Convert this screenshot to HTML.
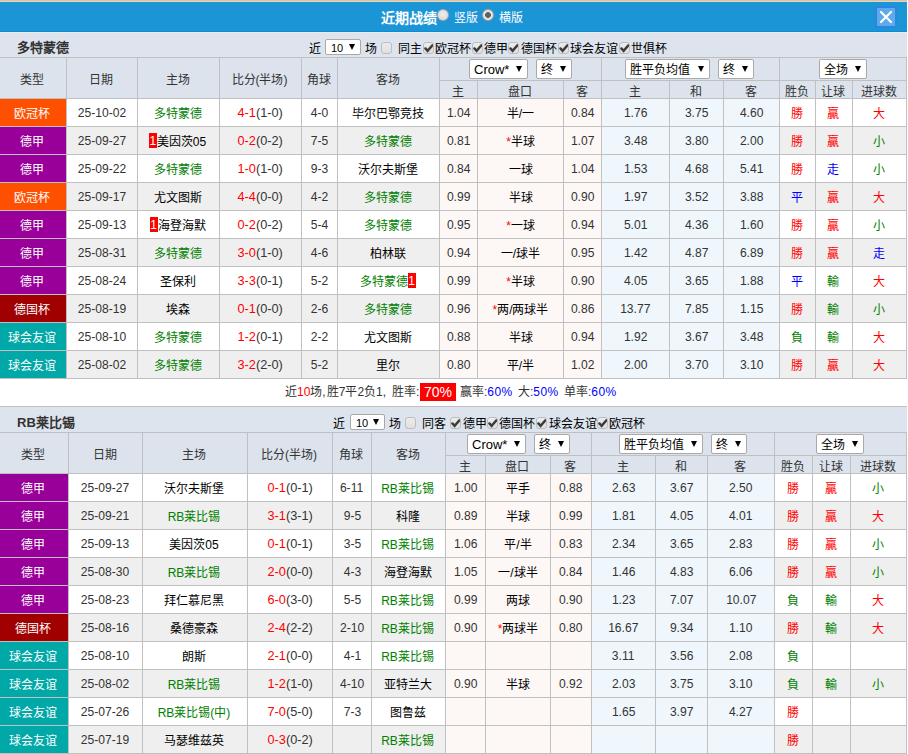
<!DOCTYPE html>
<html lang="zh-CN"><head><meta charset="utf-8"><title>近期战绩</title><style>
*{margin:0;padding:0;box-sizing:content-box}
html,body{width:908px;height:754px;overflow:hidden;background:#fff}
body{position:relative;font-family:"Liberation Sans",sans-serif;font-size:12px;color:#333}
body>div,body>svg{position:absolute;text-align:center;white-space:nowrap;overflow:hidden}
.sel{position:absolute;background:#fff;border:1px solid #a9a9a9;border-radius:2px;color:#000;text-align:left;padding-left:4px;box-sizing:border-box}
.tri{position:absolute;right:5px;top:50%;margin-top:-3px;width:0;height:0;border-left:3px solid transparent;border-right:3px solid transparent;border-top:6px solid #000}
.cb{position:absolute;width:9px;height:10px;border:1px solid #bdbdbd;border-radius:3px;background:linear-gradient(#ececec,#e0e0e0)}
.radio{position:absolute;width:10px;height:10px;border-radius:50%;border:1px solid #a8a8a8;background:radial-gradient(circle at 50% 40%,#ececec,#d6d6d6)}
.radio.on{background:radial-gradient(circle,#606060 0,#606060 2.6px,#f0f0f0 3.2px,#e0e0e0 4.5px,#c8c8c8 6px)}
.dg{display:inline-block;font-size:13px;transform:scaleX(0.93);line-height:normal;vertical-align:baseline;position:relative;top:-1px}
.bd{display:inline-block;position:relative;top:-2px;background:#f00;color:#fff;width:8px;height:15px;line-height:16px;font-size:12px;vertical-align:middle;text-align:center;overflow:hidden}
</style></head>
<body>
<div style="left:0px;top:0px;width:907px;height:1px;background:#c6c6c8"></div>
<div style="left:0px;top:1px;width:907px;height:1px;background:#f2d59c"></div>
<div style="left:0px;top:2px;width:907px;height:29px;background:#1b95d6"></div>
<div style="left:0px;top:31px;width:907px;height:1px;background:#0a8dd1"></div>
<div style="left:0px;top:32px;width:907px;height:1px;background:#e8ebef"></div>
<div style="left:875px;top:6px;width:18px;height:18px;border:2px solid #2a87df;background:#5eaaea"></div>
<svg style="position:absolute;left:875px;top:6px" width="22" height="22" viewBox="0 0 22 22"><path d="M6 6 L16 16 M16 6 L6 16" stroke="#fff" stroke-width="2.2" stroke-linecap="round"/></svg>
<div style="left:381px;top:9px;width:60px;height:18px;color:#fff;font-weight:bold;font-size:14px;line-height:18px;text-align:left">近期战绩</div>
<div class="radio" style="left:437px;top:9px"></div>
<div style="left:454px;top:10px;width:30px;height:16px;color:#fff;font-size:12px;line-height:16px;text-align:left">竖版</div>
<div class="radio on" style="left:482px;top:9px"></div>
<div style="left:499px;top:10px;width:30px;height:16px;color:#fff;font-size:12px;line-height:16px;text-align:left">横版</div>
<div style="left:0px;top:33px;width:907px;height:24px;background:#dde4ee"></div>
<div style="left:17px;top:39px;width:80px;height:17px;font-weight:bold;font-size:13px;line-height:17px;text-align:left;color:#333">多特蒙德</div>
<div style="left:309px;top:41px;width:60px;height:16px;font-size:12px;line-height:16px;text-align:left;color:#000;white-space:nowrap">近</div>
<div class="sel" style="left:325px;top:39px;width:36px;height:16px;line-height:17px;font-size:11px;padding-left:5px">10<i class="tri"></i></div>
<div style="left:365px;top:41px;width:60px;height:16px;font-size:12px;line-height:16px;text-align:left;color:#000;white-space:nowrap">场</div>
<div class="cb" style="left:381px;top:42px"></div>
<div style="left:398px;top:41px;width:60px;height:16px;font-size:12px;line-height:16px;text-align:left;color:#000;white-space:nowrap">同主</div>
<div class="cb" style="left:423px;top:42px"><svg width="11" height="12" viewBox="0 0 11 12" style="position:absolute;left:-1px;top:-1px"><path d="M2.4 6.4 L4.6 8.9 L9.4 3.3" stroke="#3c3c3c" stroke-width="2.4" fill="none" stroke-linecap="round" stroke-linejoin="miter"/></svg></div>
<div style="left:435px;top:41px;width:60px;height:16px;font-size:12px;line-height:16px;text-align:left;color:#000;white-space:nowrap">欧冠杯</div>
<div class="cb" style="left:472px;top:42px"><svg width="11" height="12" viewBox="0 0 11 12" style="position:absolute;left:-1px;top:-1px"><path d="M2.4 6.4 L4.6 8.9 L9.4 3.3" stroke="#3c3c3c" stroke-width="2.4" fill="none" stroke-linecap="round" stroke-linejoin="miter"/></svg></div>
<div style="left:484px;top:41px;width:60px;height:16px;font-size:12px;line-height:16px;text-align:left;color:#000;white-space:nowrap">德甲</div>
<div class="cb" style="left:508px;top:42px"><svg width="11" height="12" viewBox="0 0 11 12" style="position:absolute;left:-1px;top:-1px"><path d="M2.4 6.4 L4.6 8.9 L9.4 3.3" stroke="#3c3c3c" stroke-width="2.4" fill="none" stroke-linecap="round" stroke-linejoin="miter"/></svg></div>
<div style="left:521px;top:41px;width:60px;height:16px;font-size:12px;line-height:16px;text-align:left;color:#000;white-space:nowrap">德国杯</div>
<div class="cb" style="left:558px;top:42px"><svg width="11" height="12" viewBox="0 0 11 12" style="position:absolute;left:-1px;top:-1px"><path d="M2.4 6.4 L4.6 8.9 L9.4 3.3" stroke="#3c3c3c" stroke-width="2.4" fill="none" stroke-linecap="round" stroke-linejoin="miter"/></svg></div>
<div style="left:570px;top:41px;width:60px;height:16px;font-size:12px;line-height:16px;text-align:left;color:#000;white-space:nowrap">球会友谊</div>
<div class="cb" style="left:619px;top:42px"><svg width="11" height="12" viewBox="0 0 11 12" style="position:absolute;left:-1px;top:-1px"><path d="M2.4 6.4 L4.6 8.9 L9.4 3.3" stroke="#3c3c3c" stroke-width="2.4" fill="none" stroke-linecap="round" stroke-linejoin="miter"/></svg></div>
<div style="left:631px;top:41px;width:60px;height:16px;font-size:12px;line-height:16px;text-align:left;color:#000;white-space:nowrap">世俱杯</div>
<div style="left:0px;top:57px;width:907px;height:322px;background:#c0c0c0"></div>
<div style="left:0px;top:58px;width:66px;height:40px;background:#dce3ed;line-height:44px;padding-right:2px;box-sizing:border-box">类型</div>
<div style="left:67px;top:58px;width:70px;height:40px;background:#dce3ed;line-height:44px;padding-right:2px;box-sizing:border-box">日期</div>
<div style="left:138px;top:58px;width:81px;height:40px;background:#dce3ed;line-height:44px;padding-right:2px;box-sizing:border-box">主场</div>
<div style="left:220px;top:58px;width:81px;height:40px;background:#dce3ed;line-height:44px;padding-right:2px;box-sizing:border-box">比分(半场)</div>
<div style="left:302px;top:58px;width:35px;height:40px;background:#dce3ed;line-height:44px;padding-right:2px;box-sizing:border-box">角球</div>
<div style="left:338px;top:58px;width:101px;height:40px;background:#dce3ed;line-height:44px;padding-right:2px;box-sizing:border-box">客场</div>
<div style="left:440px;top:58px;width:161px;height:22px;background:#dce3ed"></div>
<div style="left:602px;top:58px;width:177px;height:22px;background:#dce3ed"></div>
<div style="left:780px;top:58px;width:126px;height:22px;background:#dce3ed"></div>
<div style="left:440px;top:81px;width:37px;height:17px;background:#dce3ed;line-height:22px;padding-right:2px;box-sizing:border-box">主</div>
<div style="left:478px;top:81px;width:85px;height:17px;background:#dce3ed;line-height:22px;padding-right:2px;box-sizing:border-box">盘口</div>
<div style="left:564px;top:81px;width:37px;height:17px;background:#dce3ed;line-height:22px;padding-right:2px;box-sizing:border-box">客</div>
<div style="left:602px;top:81px;width:67px;height:17px;background:#dce3ed;line-height:22px;padding-right:2px;box-sizing:border-box">主</div>
<div style="left:670px;top:81px;width:53px;height:17px;background:#dce3ed;line-height:22px;padding-right:2px;box-sizing:border-box">和</div>
<div style="left:724px;top:81px;width:55px;height:17px;background:#dce3ed;line-height:22px;padding-right:2px;box-sizing:border-box">客</div>
<div style="left:780px;top:81px;width:35px;height:17px;background:#dce3ed;line-height:22px;padding-right:2px;box-sizing:border-box">胜负</div>
<div style="left:816px;top:81px;width:36px;height:17px;background:#dce3ed;line-height:22px;padding-right:2px;box-sizing:border-box">让球</div>
<div style="left:853px;top:81px;width:53px;height:17px;background:#dce3ed;line-height:22px;padding-right:2px;box-sizing:border-box">进球数</div>
<div class="sel" style="left:469px;top:59px;width:59px;height:20px;line-height:20px;font-size:13px">Crow*<i class="tri"></i></div>
<div class="sel" style="left:536px;top:59px;width:36px;height:20px;line-height:20px;font-size:12px">终<i class="tri"></i></div>
<div class="sel" style="left:625px;top:59px;width:85px;height:20px;line-height:20px;font-size:12px">胜平负均值<i class="tri"></i></div>
<div class="sel" style="left:718px;top:59px;width:36px;height:20px;line-height:20px;font-size:12px">终<i class="tri"></i></div>
<div class="sel" style="left:819px;top:59px;width:48px;height:20px;line-height:20px;font-size:12px">全场<i class="tri"></i></div>
<div style="left:0px;top:99px;width:66px;height:27px;padding-right:2px;box-sizing:border-box;background:#ff5000;color:#fff;line-height:31px">欧冠杯</div>
<div style="left:67px;top:99px;width:70px;height:27px;background:#ffffff;color:#333;line-height:31px"><span class="dg">25-10-02</span></div>
<div style="left:138px;top:99px;width:81px;height:27px;padding-right:2px;box-sizing:border-box;background:#ffffff;color:#000;line-height:31px"><span style="color:#008000">多特蒙德</span></div>
<div style="left:220px;top:99px;width:81px;height:27px;background:#ffffff;color:#333;line-height:31px"><span class="dg" style="transform:scaleX(0.98)"><span style="color:#ff0000">4-1</span>(1-0)</span></div>
<div style="left:302px;top:99px;width:35px;height:27px;background:#ffffff;color:#333;line-height:31px"><span class="dg">4-0</span></div>
<div style="left:338px;top:99px;width:101px;height:27px;padding-right:2px;box-sizing:border-box;background:#ffffff;color:#000;line-height:31px"><span style="color:#000">毕尔巴鄂竞技</span></div>
<div style="left:440px;top:99px;width:37px;height:27px;background:#fdf8f6;color:#333;line-height:31px"><span class="dg">1.04</span></div>
<div style="left:478px;top:99px;width:85px;height:27px;background:#fdf8f6;color:#000;line-height:31px">半/一</div>
<div style="left:564px;top:99px;width:37px;height:27px;background:#fdf8f6;color:#333;line-height:31px"><span class="dg">0.84</span></div>
<div style="left:602px;top:99px;width:67px;height:27px;background:#f0f7fc;color:#333;line-height:31px"><span class="dg">1.76</span></div>
<div style="left:670px;top:99px;width:53px;height:27px;background:#f0f7fc;color:#333;line-height:31px"><span class="dg">3.75</span></div>
<div style="left:724px;top:99px;width:55px;height:27px;background:#f0f7fc;color:#333;line-height:31px"><span class="dg">4.60</span></div>
<div style="left:780px;top:99px;width:35px;height:27px;padding-right:2px;box-sizing:border-box;background:#ffffff;color:#ff0000;line-height:31px">勝</div>
<div style="left:816px;top:99px;width:36px;height:27px;padding-right:2px;box-sizing:border-box;background:#ffffff;color:#ff0000;line-height:31px">贏</div>
<div style="left:853px;top:99px;width:53px;height:27px;padding-right:2px;box-sizing:border-box;background:#ffffff;color:#ff0000;line-height:31px">大</div>
<div style="left:0px;top:127px;width:66px;height:27px;padding-right:2px;box-sizing:border-box;background:#990099;color:#fff;line-height:31px">德甲</div>
<div style="left:67px;top:127px;width:70px;height:27px;background:#efefef;color:#333;line-height:31px"><span class="dg">25-09-27</span></div>
<div style="left:138px;top:127px;width:81px;height:27px;padding-right:2px;box-sizing:border-box;background:#efefef;color:#000;line-height:31px"><span class="bd">1</span><span style="color:#000">美因茨05</span></div>
<div style="left:220px;top:127px;width:81px;height:27px;background:#efefef;color:#333;line-height:31px"><span class="dg" style="transform:scaleX(0.98)"><span style="color:#ff0000">0-2</span>(0-2)</span></div>
<div style="left:302px;top:127px;width:35px;height:27px;background:#efefef;color:#333;line-height:31px"><span class="dg">7-5</span></div>
<div style="left:338px;top:127px;width:101px;height:27px;padding-right:2px;box-sizing:border-box;background:#efefef;color:#000;line-height:31px"><span style="color:#008000">多特蒙德</span></div>
<div style="left:440px;top:127px;width:37px;height:27px;background:#fdf8f6;color:#333;line-height:31px"><span class="dg">0.81</span></div>
<div style="left:478px;top:127px;width:85px;height:27px;background:#fdf8f6;color:#000;line-height:31px"><span style="color:#ff0000">*</span>半球</div>
<div style="left:564px;top:127px;width:37px;height:27px;background:#fdf8f6;color:#333;line-height:31px"><span class="dg">1.07</span></div>
<div style="left:602px;top:127px;width:67px;height:27px;background:#f0f7fc;color:#333;line-height:31px"><span class="dg">3.48</span></div>
<div style="left:670px;top:127px;width:53px;height:27px;background:#f0f7fc;color:#333;line-height:31px"><span class="dg">3.80</span></div>
<div style="left:724px;top:127px;width:55px;height:27px;background:#f0f7fc;color:#333;line-height:31px"><span class="dg">2.00</span></div>
<div style="left:780px;top:127px;width:35px;height:27px;padding-right:2px;box-sizing:border-box;background:#efefef;color:#ff0000;line-height:31px">勝</div>
<div style="left:816px;top:127px;width:36px;height:27px;padding-right:2px;box-sizing:border-box;background:#efefef;color:#ff0000;line-height:31px">贏</div>
<div style="left:853px;top:127px;width:53px;height:27px;padding-right:2px;box-sizing:border-box;background:#efefef;color:#008000;line-height:31px">小</div>
<div style="left:0px;top:155px;width:66px;height:27px;padding-right:2px;box-sizing:border-box;background:#990099;color:#fff;line-height:31px">德甲</div>
<div style="left:67px;top:155px;width:70px;height:27px;background:#ffffff;color:#333;line-height:31px"><span class="dg">25-09-22</span></div>
<div style="left:138px;top:155px;width:81px;height:27px;padding-right:2px;box-sizing:border-box;background:#ffffff;color:#000;line-height:31px"><span style="color:#008000">多特蒙德</span></div>
<div style="left:220px;top:155px;width:81px;height:27px;background:#ffffff;color:#333;line-height:31px"><span class="dg" style="transform:scaleX(0.98)"><span style="color:#ff0000">1-0</span>(1-0)</span></div>
<div style="left:302px;top:155px;width:35px;height:27px;background:#ffffff;color:#333;line-height:31px"><span class="dg">9-3</span></div>
<div style="left:338px;top:155px;width:101px;height:27px;padding-right:2px;box-sizing:border-box;background:#ffffff;color:#000;line-height:31px"><span style="color:#000">沃尔夫斯堡</span></div>
<div style="left:440px;top:155px;width:37px;height:27px;background:#fdf8f6;color:#333;line-height:31px"><span class="dg">0.84</span></div>
<div style="left:478px;top:155px;width:85px;height:27px;background:#fdf8f6;color:#000;line-height:31px">一球</div>
<div style="left:564px;top:155px;width:37px;height:27px;background:#fdf8f6;color:#333;line-height:31px"><span class="dg">1.04</span></div>
<div style="left:602px;top:155px;width:67px;height:27px;background:#f0f7fc;color:#333;line-height:31px"><span class="dg">1.53</span></div>
<div style="left:670px;top:155px;width:53px;height:27px;background:#f0f7fc;color:#333;line-height:31px"><span class="dg">4.68</span></div>
<div style="left:724px;top:155px;width:55px;height:27px;background:#f0f7fc;color:#333;line-height:31px"><span class="dg">5.41</span></div>
<div style="left:780px;top:155px;width:35px;height:27px;padding-right:2px;box-sizing:border-box;background:#ffffff;color:#ff0000;line-height:31px">勝</div>
<div style="left:816px;top:155px;width:36px;height:27px;padding-right:2px;box-sizing:border-box;background:#ffffff;color:#0000ff;line-height:31px">走</div>
<div style="left:853px;top:155px;width:53px;height:27px;padding-right:2px;box-sizing:border-box;background:#ffffff;color:#008000;line-height:31px">小</div>
<div style="left:0px;top:183px;width:66px;height:27px;padding-right:2px;box-sizing:border-box;background:#ff5000;color:#fff;line-height:31px">欧冠杯</div>
<div style="left:67px;top:183px;width:70px;height:27px;background:#efefef;color:#333;line-height:31px"><span class="dg">25-09-17</span></div>
<div style="left:138px;top:183px;width:81px;height:27px;padding-right:2px;box-sizing:border-box;background:#efefef;color:#000;line-height:31px"><span style="color:#000">尤文图斯</span></div>
<div style="left:220px;top:183px;width:81px;height:27px;background:#efefef;color:#333;line-height:31px"><span class="dg" style="transform:scaleX(0.98)"><span style="color:#ff0000">4-4</span>(0-0)</span></div>
<div style="left:302px;top:183px;width:35px;height:27px;background:#efefef;color:#333;line-height:31px"><span class="dg">4-2</span></div>
<div style="left:338px;top:183px;width:101px;height:27px;padding-right:2px;box-sizing:border-box;background:#efefef;color:#000;line-height:31px"><span style="color:#008000">多特蒙德</span></div>
<div style="left:440px;top:183px;width:37px;height:27px;background:#fdf8f6;color:#333;line-height:31px"><span class="dg">0.99</span></div>
<div style="left:478px;top:183px;width:85px;height:27px;background:#fdf8f6;color:#000;line-height:31px">半球</div>
<div style="left:564px;top:183px;width:37px;height:27px;background:#fdf8f6;color:#333;line-height:31px"><span class="dg">0.90</span></div>
<div style="left:602px;top:183px;width:67px;height:27px;background:#f0f7fc;color:#333;line-height:31px"><span class="dg">1.97</span></div>
<div style="left:670px;top:183px;width:53px;height:27px;background:#f0f7fc;color:#333;line-height:31px"><span class="dg">3.52</span></div>
<div style="left:724px;top:183px;width:55px;height:27px;background:#f0f7fc;color:#333;line-height:31px"><span class="dg">3.88</span></div>
<div style="left:780px;top:183px;width:35px;height:27px;padding-right:2px;box-sizing:border-box;background:#efefef;color:#0000ff;line-height:31px">平</div>
<div style="left:816px;top:183px;width:36px;height:27px;padding-right:2px;box-sizing:border-box;background:#efefef;color:#ff0000;line-height:31px">贏</div>
<div style="left:853px;top:183px;width:53px;height:27px;padding-right:2px;box-sizing:border-box;background:#efefef;color:#ff0000;line-height:31px">大</div>
<div style="left:0px;top:211px;width:66px;height:27px;padding-right:2px;box-sizing:border-box;background:#990099;color:#fff;line-height:31px">德甲</div>
<div style="left:67px;top:211px;width:70px;height:27px;background:#ffffff;color:#333;line-height:31px"><span class="dg">25-09-13</span></div>
<div style="left:138px;top:211px;width:81px;height:27px;padding-right:2px;box-sizing:border-box;background:#ffffff;color:#000;line-height:31px"><span class="bd">1</span><span style="color:#000">海登海默</span></div>
<div style="left:220px;top:211px;width:81px;height:27px;background:#ffffff;color:#333;line-height:31px"><span class="dg" style="transform:scaleX(0.98)"><span style="color:#ff0000">0-2</span>(0-2)</span></div>
<div style="left:302px;top:211px;width:35px;height:27px;background:#ffffff;color:#333;line-height:31px"><span class="dg">5-4</span></div>
<div style="left:338px;top:211px;width:101px;height:27px;padding-right:2px;box-sizing:border-box;background:#ffffff;color:#000;line-height:31px"><span style="color:#008000">多特蒙德</span></div>
<div style="left:440px;top:211px;width:37px;height:27px;background:#fdf8f6;color:#333;line-height:31px"><span class="dg">0.95</span></div>
<div style="left:478px;top:211px;width:85px;height:27px;background:#fdf8f6;color:#000;line-height:31px"><span style="color:#ff0000">*</span>一球</div>
<div style="left:564px;top:211px;width:37px;height:27px;background:#fdf8f6;color:#333;line-height:31px"><span class="dg">0.94</span></div>
<div style="left:602px;top:211px;width:67px;height:27px;background:#f0f7fc;color:#333;line-height:31px"><span class="dg">5.01</span></div>
<div style="left:670px;top:211px;width:53px;height:27px;background:#f0f7fc;color:#333;line-height:31px"><span class="dg">4.36</span></div>
<div style="left:724px;top:211px;width:55px;height:27px;background:#f0f7fc;color:#333;line-height:31px"><span class="dg">1.60</span></div>
<div style="left:780px;top:211px;width:35px;height:27px;padding-right:2px;box-sizing:border-box;background:#ffffff;color:#ff0000;line-height:31px">勝</div>
<div style="left:816px;top:211px;width:36px;height:27px;padding-right:2px;box-sizing:border-box;background:#ffffff;color:#ff0000;line-height:31px">贏</div>
<div style="left:853px;top:211px;width:53px;height:27px;padding-right:2px;box-sizing:border-box;background:#ffffff;color:#008000;line-height:31px">小</div>
<div style="left:0px;top:239px;width:66px;height:27px;padding-right:2px;box-sizing:border-box;background:#990099;color:#fff;line-height:31px">德甲</div>
<div style="left:67px;top:239px;width:70px;height:27px;background:#efefef;color:#333;line-height:31px"><span class="dg">25-08-31</span></div>
<div style="left:138px;top:239px;width:81px;height:27px;padding-right:2px;box-sizing:border-box;background:#efefef;color:#000;line-height:31px"><span style="color:#008000">多特蒙德</span></div>
<div style="left:220px;top:239px;width:81px;height:27px;background:#efefef;color:#333;line-height:31px"><span class="dg" style="transform:scaleX(0.98)"><span style="color:#ff0000">3-0</span>(1-0)</span></div>
<div style="left:302px;top:239px;width:35px;height:27px;background:#efefef;color:#333;line-height:31px"><span class="dg">4-6</span></div>
<div style="left:338px;top:239px;width:101px;height:27px;padding-right:2px;box-sizing:border-box;background:#efefef;color:#000;line-height:31px"><span style="color:#000">柏林联</span></div>
<div style="left:440px;top:239px;width:37px;height:27px;background:#fdf8f6;color:#333;line-height:31px"><span class="dg">0.94</span></div>
<div style="left:478px;top:239px;width:85px;height:27px;background:#fdf8f6;color:#000;line-height:31px">一/球半</div>
<div style="left:564px;top:239px;width:37px;height:27px;background:#fdf8f6;color:#333;line-height:31px"><span class="dg">0.95</span></div>
<div style="left:602px;top:239px;width:67px;height:27px;background:#f0f7fc;color:#333;line-height:31px"><span class="dg">1.42</span></div>
<div style="left:670px;top:239px;width:53px;height:27px;background:#f0f7fc;color:#333;line-height:31px"><span class="dg">4.87</span></div>
<div style="left:724px;top:239px;width:55px;height:27px;background:#f0f7fc;color:#333;line-height:31px"><span class="dg">6.89</span></div>
<div style="left:780px;top:239px;width:35px;height:27px;padding-right:2px;box-sizing:border-box;background:#efefef;color:#ff0000;line-height:31px">勝</div>
<div style="left:816px;top:239px;width:36px;height:27px;padding-right:2px;box-sizing:border-box;background:#efefef;color:#ff0000;line-height:31px">贏</div>
<div style="left:853px;top:239px;width:53px;height:27px;padding-right:2px;box-sizing:border-box;background:#efefef;color:#0000ff;line-height:31px">走</div>
<div style="left:0px;top:267px;width:66px;height:27px;padding-right:2px;box-sizing:border-box;background:#990099;color:#fff;line-height:31px">德甲</div>
<div style="left:67px;top:267px;width:70px;height:27px;background:#ffffff;color:#333;line-height:31px"><span class="dg">25-08-24</span></div>
<div style="left:138px;top:267px;width:81px;height:27px;padding-right:2px;box-sizing:border-box;background:#ffffff;color:#000;line-height:31px"><span style="color:#000">圣保利</span></div>
<div style="left:220px;top:267px;width:81px;height:27px;background:#ffffff;color:#333;line-height:31px"><span class="dg" style="transform:scaleX(0.98)"><span style="color:#ff0000">3-3</span>(0-1)</span></div>
<div style="left:302px;top:267px;width:35px;height:27px;background:#ffffff;color:#333;line-height:31px"><span class="dg">5-2</span></div>
<div style="left:338px;top:267px;width:101px;height:27px;padding-right:2px;box-sizing:border-box;background:#ffffff;color:#000;line-height:31px"><span style="color:#008000">多特蒙德</span><span class="bd">1</span></div>
<div style="left:440px;top:267px;width:37px;height:27px;background:#fdf8f6;color:#333;line-height:31px"><span class="dg">0.99</span></div>
<div style="left:478px;top:267px;width:85px;height:27px;background:#fdf8f6;color:#000;line-height:31px"><span style="color:#ff0000">*</span>半球</div>
<div style="left:564px;top:267px;width:37px;height:27px;background:#fdf8f6;color:#333;line-height:31px"><span class="dg">0.90</span></div>
<div style="left:602px;top:267px;width:67px;height:27px;background:#f0f7fc;color:#333;line-height:31px"><span class="dg">4.05</span></div>
<div style="left:670px;top:267px;width:53px;height:27px;background:#f0f7fc;color:#333;line-height:31px"><span class="dg">3.65</span></div>
<div style="left:724px;top:267px;width:55px;height:27px;background:#f0f7fc;color:#333;line-height:31px"><span class="dg">1.88</span></div>
<div style="left:780px;top:267px;width:35px;height:27px;padding-right:2px;box-sizing:border-box;background:#ffffff;color:#0000ff;line-height:31px">平</div>
<div style="left:816px;top:267px;width:36px;height:27px;padding-right:2px;box-sizing:border-box;background:#ffffff;color:#008000;line-height:31px">輸</div>
<div style="left:853px;top:267px;width:53px;height:27px;padding-right:2px;box-sizing:border-box;background:#ffffff;color:#ff0000;line-height:31px">大</div>
<div style="left:0px;top:295px;width:66px;height:27px;padding-right:2px;box-sizing:border-box;background:#a00000;color:#fff;line-height:31px">德国杯</div>
<div style="left:67px;top:295px;width:70px;height:27px;background:#efefef;color:#333;line-height:31px"><span class="dg">25-08-19</span></div>
<div style="left:138px;top:295px;width:81px;height:27px;padding-right:2px;box-sizing:border-box;background:#efefef;color:#000;line-height:31px"><span style="color:#000">埃森</span></div>
<div style="left:220px;top:295px;width:81px;height:27px;background:#efefef;color:#333;line-height:31px"><span class="dg" style="transform:scaleX(0.98)"><span style="color:#ff0000">0-1</span>(0-0)</span></div>
<div style="left:302px;top:295px;width:35px;height:27px;background:#efefef;color:#333;line-height:31px"><span class="dg">2-6</span></div>
<div style="left:338px;top:295px;width:101px;height:27px;padding-right:2px;box-sizing:border-box;background:#efefef;color:#000;line-height:31px"><span style="color:#008000">多特蒙德</span></div>
<div style="left:440px;top:295px;width:37px;height:27px;background:#fdf8f6;color:#333;line-height:31px"><span class="dg">0.96</span></div>
<div style="left:478px;top:295px;width:85px;height:27px;background:#fdf8f6;color:#000;line-height:31px"><span style="color:#ff0000">*</span>两/两球半</div>
<div style="left:564px;top:295px;width:37px;height:27px;background:#fdf8f6;color:#333;line-height:31px"><span class="dg">0.86</span></div>
<div style="left:602px;top:295px;width:67px;height:27px;background:#f0f7fc;color:#333;line-height:31px"><span class="dg">13.77</span></div>
<div style="left:670px;top:295px;width:53px;height:27px;background:#f0f7fc;color:#333;line-height:31px"><span class="dg">7.85</span></div>
<div style="left:724px;top:295px;width:55px;height:27px;background:#f0f7fc;color:#333;line-height:31px"><span class="dg">1.15</span></div>
<div style="left:780px;top:295px;width:35px;height:27px;padding-right:2px;box-sizing:border-box;background:#efefef;color:#ff0000;line-height:31px">勝</div>
<div style="left:816px;top:295px;width:36px;height:27px;padding-right:2px;box-sizing:border-box;background:#efefef;color:#008000;line-height:31px">輸</div>
<div style="left:853px;top:295px;width:53px;height:27px;padding-right:2px;box-sizing:border-box;background:#efefef;color:#008000;line-height:31px">小</div>
<div style="left:0px;top:323px;width:66px;height:27px;padding-right:2px;box-sizing:border-box;background:#00a8a8;color:#fff;line-height:31px">球会友谊</div>
<div style="left:67px;top:323px;width:70px;height:27px;background:#ffffff;color:#333;line-height:31px"><span class="dg">25-08-10</span></div>
<div style="left:138px;top:323px;width:81px;height:27px;padding-right:2px;box-sizing:border-box;background:#ffffff;color:#000;line-height:31px"><span style="color:#008000">多特蒙德</span></div>
<div style="left:220px;top:323px;width:81px;height:27px;background:#ffffff;color:#333;line-height:31px"><span class="dg" style="transform:scaleX(0.98)"><span style="color:#ff0000">1-2</span>(0-1)</span></div>
<div style="left:302px;top:323px;width:35px;height:27px;background:#ffffff;color:#333;line-height:31px"><span class="dg">2-2</span></div>
<div style="left:338px;top:323px;width:101px;height:27px;padding-right:2px;box-sizing:border-box;background:#ffffff;color:#000;line-height:31px"><span style="color:#000">尤文图斯</span></div>
<div style="left:440px;top:323px;width:37px;height:27px;background:#fdf8f6;color:#333;line-height:31px"><span class="dg">0.88</span></div>
<div style="left:478px;top:323px;width:85px;height:27px;background:#fdf8f6;color:#000;line-height:31px">半球</div>
<div style="left:564px;top:323px;width:37px;height:27px;background:#fdf8f6;color:#333;line-height:31px"><span class="dg">0.94</span></div>
<div style="left:602px;top:323px;width:67px;height:27px;background:#f0f7fc;color:#333;line-height:31px"><span class="dg">1.92</span></div>
<div style="left:670px;top:323px;width:53px;height:27px;background:#f0f7fc;color:#333;line-height:31px"><span class="dg">3.67</span></div>
<div style="left:724px;top:323px;width:55px;height:27px;background:#f0f7fc;color:#333;line-height:31px"><span class="dg">3.48</span></div>
<div style="left:780px;top:323px;width:35px;height:27px;padding-right:2px;box-sizing:border-box;background:#ffffff;color:#008000;line-height:31px">負</div>
<div style="left:816px;top:323px;width:36px;height:27px;padding-right:2px;box-sizing:border-box;background:#ffffff;color:#008000;line-height:31px">輸</div>
<div style="left:853px;top:323px;width:53px;height:27px;padding-right:2px;box-sizing:border-box;background:#ffffff;color:#ff0000;line-height:31px">大</div>
<div style="left:0px;top:351px;width:66px;height:27px;padding-right:2px;box-sizing:border-box;background:#00a8a8;color:#fff;line-height:31px">球会友谊</div>
<div style="left:67px;top:351px;width:70px;height:27px;background:#efefef;color:#333;line-height:31px"><span class="dg">25-08-02</span></div>
<div style="left:138px;top:351px;width:81px;height:27px;padding-right:2px;box-sizing:border-box;background:#efefef;color:#000;line-height:31px"><span style="color:#008000">多特蒙德</span></div>
<div style="left:220px;top:351px;width:81px;height:27px;background:#efefef;color:#333;line-height:31px"><span class="dg" style="transform:scaleX(0.98)"><span style="color:#ff0000">3-2</span>(2-0)</span></div>
<div style="left:302px;top:351px;width:35px;height:27px;background:#efefef;color:#333;line-height:31px"><span class="dg">5-2</span></div>
<div style="left:338px;top:351px;width:101px;height:27px;padding-right:2px;box-sizing:border-box;background:#efefef;color:#000;line-height:31px"><span style="color:#000">里尔</span></div>
<div style="left:440px;top:351px;width:37px;height:27px;background:#fdf8f6;color:#333;line-height:31px"><span class="dg">0.80</span></div>
<div style="left:478px;top:351px;width:85px;height:27px;background:#fdf8f6;color:#000;line-height:31px">平/半</div>
<div style="left:564px;top:351px;width:37px;height:27px;background:#fdf8f6;color:#333;line-height:31px"><span class="dg">1.02</span></div>
<div style="left:602px;top:351px;width:67px;height:27px;background:#f0f7fc;color:#333;line-height:31px"><span class="dg">2.00</span></div>
<div style="left:670px;top:351px;width:53px;height:27px;background:#f0f7fc;color:#333;line-height:31px"><span class="dg">3.70</span></div>
<div style="left:724px;top:351px;width:55px;height:27px;background:#f0f7fc;color:#333;line-height:31px"><span class="dg">3.10</span></div>
<div style="left:780px;top:351px;width:35px;height:27px;padding-right:2px;box-sizing:border-box;background:#efefef;color:#ff0000;line-height:31px">勝</div>
<div style="left:816px;top:351px;width:36px;height:27px;padding-right:2px;box-sizing:border-box;background:#efefef;color:#ff0000;line-height:31px">贏</div>
<div style="left:853px;top:351px;width:53px;height:27px;padding-right:2px;box-sizing:border-box;background:#efefef;color:#ff0000;line-height:31px">大</div>
<div style="left:0px;top:379px;width:906px;height:27px;background:#fff"></div>
<div style="left:285px;top:382px;height:20px;line-height:20px;font-size:12px;color:#333;text-align:left;width:auto">近<span style="color:#f00">10</span>场,<span style="margin-left:1px">胜</span>7平2负1,</div>
<div style="left:392px;top:382px;height:20px;line-height:20px;font-size:12px;color:#333;text-align:left;width:auto">胜率:</div>
<div style="left:420px;top:383px;width:36px;height:18px;line-height:19px;background:#f00;color:#fff;font-size:14px">70%</div>
<div style="left:460px;top:382px;height:20px;line-height:20px;font-size:12px;color:#333;text-align:left;width:auto">赢率:<span style="color:#00f;letter-spacing:0.4px">60%</span></div>
<div style="left:518px;top:382px;height:20px;line-height:20px;font-size:12px;color:#333;text-align:left;width:auto">大:<span style="color:#00f;letter-spacing:0.4px">50%</span></div>
<div style="left:564px;top:382px;height:20px;line-height:20px;font-size:12px;color:#333;text-align:left;width:auto">单率:<span style="color:#00f;letter-spacing:0.4px">60%</span></div>
<div style="left:0px;top:406px;width:907px;height:1px;background:#c0c0c0"></div>
<div style="left:0px;top:407px;width:907px;height:25px;background:#dde4ee"></div>
<div style="left:17px;top:414px;width:80px;height:17px;font-weight:bold;font-size:13px;line-height:17px;text-align:left;color:#333">RB莱比锡</div>
<div style="left:333px;top:416px;width:60px;height:16px;font-size:12px;line-height:16px;text-align:left;color:#000;white-space:nowrap">近</div>
<div class="sel" style="left:350px;top:414px;width:35px;height:16px;line-height:17px;font-size:11px;padding-left:5px">10<i class="tri"></i></div>
<div style="left:389px;top:416px;width:60px;height:16px;font-size:12px;line-height:16px;text-align:left;color:#000;white-space:nowrap">场</div>
<div class="cb" style="left:405px;top:417px"></div>
<div style="left:422px;top:416px;width:60px;height:16px;font-size:12px;line-height:16px;text-align:left;color:#000;white-space:nowrap">同客</div>
<div class="cb" style="left:450px;top:417px"><svg width="11" height="12" viewBox="0 0 11 12" style="position:absolute;left:-1px;top:-1px"><path d="M2.4 6.4 L4.6 8.9 L9.4 3.3" stroke="#3c3c3c" stroke-width="2.4" fill="none" stroke-linecap="round" stroke-linejoin="miter"/></svg></div>
<div style="left:463px;top:416px;width:60px;height:16px;font-size:12px;line-height:16px;text-align:left;color:#000;white-space:nowrap">德甲</div>
<div class="cb" style="left:487px;top:417px"><svg width="11" height="12" viewBox="0 0 11 12" style="position:absolute;left:-1px;top:-1px"><path d="M2.4 6.4 L4.6 8.9 L9.4 3.3" stroke="#3c3c3c" stroke-width="2.4" fill="none" stroke-linecap="round" stroke-linejoin="miter"/></svg></div>
<div style="left:499px;top:416px;width:60px;height:16px;font-size:12px;line-height:16px;text-align:left;color:#000;white-space:nowrap">德国杯</div>
<div class="cb" style="left:536px;top:417px"><svg width="11" height="12" viewBox="0 0 11 12" style="position:absolute;left:-1px;top:-1px"><path d="M2.4 6.4 L4.6 8.9 L9.4 3.3" stroke="#3c3c3c" stroke-width="2.4" fill="none" stroke-linecap="round" stroke-linejoin="miter"/></svg></div>
<div style="left:549px;top:416px;width:60px;height:16px;font-size:12px;line-height:16px;text-align:left;color:#000;white-space:nowrap">球会友谊</div>
<div class="cb" style="left:597px;top:417px"><svg width="11" height="12" viewBox="0 0 11 12" style="position:absolute;left:-1px;top:-1px"><path d="M2.4 6.4 L4.6 8.9 L9.4 3.3" stroke="#3c3c3c" stroke-width="2.4" fill="none" stroke-linecap="round" stroke-linejoin="miter"/></svg></div>
<div style="left:609px;top:416px;width:60px;height:16px;font-size:12px;line-height:16px;text-align:left;color:#000;white-space:nowrap">欧冠杯</div>
<div style="left:0px;top:432px;width:907px;height:322px;background:#c0c0c0"></div>
<div style="left:0px;top:433px;width:68px;height:40px;background:#dce3ed;line-height:44px;padding-right:2px;box-sizing:border-box">类型</div>
<div style="left:69px;top:433px;width:73px;height:40px;background:#dce3ed;line-height:44px;padding-right:2px;box-sizing:border-box">日期</div>
<div style="left:143px;top:433px;width:104px;height:40px;background:#dce3ed;line-height:44px;padding-right:2px;box-sizing:border-box">主场</div>
<div style="left:248px;top:433px;width:84px;height:40px;background:#dce3ed;line-height:44px;padding-right:2px;box-sizing:border-box">比分(半场)</div>
<div style="left:333px;top:433px;width:38px;height:40px;background:#dce3ed;line-height:44px;padding-right:2px;box-sizing:border-box">角球</div>
<div style="left:372px;top:433px;width:73px;height:40px;background:#dce3ed;line-height:44px;padding-right:2px;box-sizing:border-box">客场</div>
<div style="left:446px;top:433px;width:145px;height:22px;background:#dce3ed"></div>
<div style="left:592px;top:433px;width:182px;height:22px;background:#dce3ed"></div>
<div style="left:775px;top:433px;width:131px;height:22px;background:#dce3ed"></div>
<div style="left:446px;top:456px;width:39px;height:17px;background:#dce3ed;line-height:22px;padding-right:2px;box-sizing:border-box">主</div>
<div style="left:486px;top:456px;width:64px;height:17px;background:#dce3ed;line-height:22px;padding-right:2px;box-sizing:border-box">盘口</div>
<div style="left:551px;top:456px;width:40px;height:17px;background:#dce3ed;line-height:22px;padding-right:2px;box-sizing:border-box">客</div>
<div style="left:592px;top:456px;width:63px;height:17px;background:#dce3ed;line-height:22px;padding-right:2px;box-sizing:border-box">主</div>
<div style="left:656px;top:456px;width:51px;height:17px;background:#dce3ed;line-height:22px;padding-right:2px;box-sizing:border-box">和</div>
<div style="left:708px;top:456px;width:66px;height:17px;background:#dce3ed;line-height:22px;padding-right:2px;box-sizing:border-box">客</div>
<div style="left:775px;top:456px;width:37px;height:17px;background:#dce3ed;line-height:22px;padding-right:2px;box-sizing:border-box">胜负</div>
<div style="left:813px;top:456px;width:37px;height:17px;background:#dce3ed;line-height:22px;padding-right:2px;box-sizing:border-box">让球</div>
<div style="left:851px;top:456px;width:55px;height:17px;background:#dce3ed;line-height:22px;padding-right:2px;box-sizing:border-box">进球数</div>
<div class="sel" style="left:467px;top:434px;width:59px;height:20px;line-height:20px;font-size:13px">Crow*<i class="tri"></i></div>
<div class="sel" style="left:534px;top:434px;width:36px;height:20px;line-height:20px;font-size:12px">终<i class="tri"></i></div>
<div class="sel" style="left:619px;top:434px;width:84px;height:20px;line-height:20px;font-size:12px">胜平负均值<i class="tri"></i></div>
<div class="sel" style="left:711px;top:434px;width:36px;height:20px;line-height:20px;font-size:12px">终<i class="tri"></i></div>
<div class="sel" style="left:816px;top:434px;width:48px;height:20px;line-height:20px;font-size:12px">全场<i class="tri"></i></div>
<div style="left:0px;top:474px;width:68px;height:27px;padding-right:2px;box-sizing:border-box;background:#990099;color:#fff;line-height:31px">德甲</div>
<div style="left:69px;top:474px;width:73px;height:27px;background:#ffffff;color:#333;line-height:31px"><span class="dg">25-09-27</span></div>
<div style="left:143px;top:474px;width:104px;height:27px;padding-right:2px;box-sizing:border-box;background:#ffffff;color:#000;line-height:31px"><span style="color:#000">沃尔夫斯堡</span></div>
<div style="left:248px;top:474px;width:84px;height:27px;background:#ffffff;color:#333;line-height:31px"><span class="dg" style="transform:scaleX(0.98)"><span style="color:#ff0000">0-1</span>(0-1)</span></div>
<div style="left:333px;top:474px;width:38px;height:27px;background:#ffffff;color:#333;line-height:31px"><span class="dg">6-11</span></div>
<div style="left:372px;top:474px;width:73px;height:27px;padding-right:2px;box-sizing:border-box;background:#ffffff;color:#000;line-height:31px"><span style="color:#008000">RB莱比锡</span></div>
<div style="left:446px;top:474px;width:39px;height:27px;background:#fdf8f6;color:#333;line-height:31px"><span class="dg">1.00</span></div>
<div style="left:486px;top:474px;width:64px;height:27px;background:#fdf8f6;color:#000;line-height:31px">平手</div>
<div style="left:551px;top:474px;width:40px;height:27px;background:#fdf8f6;color:#333;line-height:31px"><span class="dg">0.88</span></div>
<div style="left:592px;top:474px;width:63px;height:27px;background:#f0f7fc;color:#333;line-height:31px"><span class="dg">2.63</span></div>
<div style="left:656px;top:474px;width:51px;height:27px;background:#f0f7fc;color:#333;line-height:31px"><span class="dg">3.67</span></div>
<div style="left:708px;top:474px;width:66px;height:27px;background:#f0f7fc;color:#333;line-height:31px"><span class="dg">2.50</span></div>
<div style="left:775px;top:474px;width:37px;height:27px;padding-right:2px;box-sizing:border-box;background:#ffffff;color:#ff0000;line-height:31px">勝</div>
<div style="left:813px;top:474px;width:37px;height:27px;padding-right:2px;box-sizing:border-box;background:#ffffff;color:#ff0000;line-height:31px">贏</div>
<div style="left:851px;top:474px;width:55px;height:27px;padding-right:2px;box-sizing:border-box;background:#ffffff;color:#008000;line-height:31px">小</div>
<div style="left:0px;top:502px;width:68px;height:27px;padding-right:2px;box-sizing:border-box;background:#990099;color:#fff;line-height:31px">德甲</div>
<div style="left:69px;top:502px;width:73px;height:27px;background:#efefef;color:#333;line-height:31px"><span class="dg">25-09-21</span></div>
<div style="left:143px;top:502px;width:104px;height:27px;padding-right:2px;box-sizing:border-box;background:#efefef;color:#000;line-height:31px"><span style="color:#008000">RB莱比锡</span></div>
<div style="left:248px;top:502px;width:84px;height:27px;background:#efefef;color:#333;line-height:31px"><span class="dg" style="transform:scaleX(0.98)"><span style="color:#ff0000">3-1</span>(3-1)</span></div>
<div style="left:333px;top:502px;width:38px;height:27px;background:#efefef;color:#333;line-height:31px"><span class="dg">9-5</span></div>
<div style="left:372px;top:502px;width:73px;height:27px;padding-right:2px;box-sizing:border-box;background:#efefef;color:#000;line-height:31px"><span style="color:#000">科隆</span></div>
<div style="left:446px;top:502px;width:39px;height:27px;background:#fdf8f6;color:#333;line-height:31px"><span class="dg">0.89</span></div>
<div style="left:486px;top:502px;width:64px;height:27px;background:#fdf8f6;color:#000;line-height:31px">半球</div>
<div style="left:551px;top:502px;width:40px;height:27px;background:#fdf8f6;color:#333;line-height:31px"><span class="dg">0.99</span></div>
<div style="left:592px;top:502px;width:63px;height:27px;background:#f0f7fc;color:#333;line-height:31px"><span class="dg">1.81</span></div>
<div style="left:656px;top:502px;width:51px;height:27px;background:#f0f7fc;color:#333;line-height:31px"><span class="dg">4.05</span></div>
<div style="left:708px;top:502px;width:66px;height:27px;background:#f0f7fc;color:#333;line-height:31px"><span class="dg">4.01</span></div>
<div style="left:775px;top:502px;width:37px;height:27px;padding-right:2px;box-sizing:border-box;background:#efefef;color:#ff0000;line-height:31px">勝</div>
<div style="left:813px;top:502px;width:37px;height:27px;padding-right:2px;box-sizing:border-box;background:#efefef;color:#ff0000;line-height:31px">贏</div>
<div style="left:851px;top:502px;width:55px;height:27px;padding-right:2px;box-sizing:border-box;background:#efefef;color:#ff0000;line-height:31px">大</div>
<div style="left:0px;top:530px;width:68px;height:27px;padding-right:2px;box-sizing:border-box;background:#990099;color:#fff;line-height:31px">德甲</div>
<div style="left:69px;top:530px;width:73px;height:27px;background:#ffffff;color:#333;line-height:31px"><span class="dg">25-09-13</span></div>
<div style="left:143px;top:530px;width:104px;height:27px;padding-right:2px;box-sizing:border-box;background:#ffffff;color:#000;line-height:31px"><span style="color:#000">美因茨05</span></div>
<div style="left:248px;top:530px;width:84px;height:27px;background:#ffffff;color:#333;line-height:31px"><span class="dg" style="transform:scaleX(0.98)"><span style="color:#ff0000">0-1</span>(0-1)</span></div>
<div style="left:333px;top:530px;width:38px;height:27px;background:#ffffff;color:#333;line-height:31px"><span class="dg">3-5</span></div>
<div style="left:372px;top:530px;width:73px;height:27px;padding-right:2px;box-sizing:border-box;background:#ffffff;color:#000;line-height:31px"><span style="color:#008000">RB莱比锡</span></div>
<div style="left:446px;top:530px;width:39px;height:27px;background:#fdf8f6;color:#333;line-height:31px"><span class="dg">1.06</span></div>
<div style="left:486px;top:530px;width:64px;height:27px;background:#fdf8f6;color:#000;line-height:31px">平/半</div>
<div style="left:551px;top:530px;width:40px;height:27px;background:#fdf8f6;color:#333;line-height:31px"><span class="dg">0.83</span></div>
<div style="left:592px;top:530px;width:63px;height:27px;background:#f0f7fc;color:#333;line-height:31px"><span class="dg">2.34</span></div>
<div style="left:656px;top:530px;width:51px;height:27px;background:#f0f7fc;color:#333;line-height:31px"><span class="dg">3.65</span></div>
<div style="left:708px;top:530px;width:66px;height:27px;background:#f0f7fc;color:#333;line-height:31px"><span class="dg">2.83</span></div>
<div style="left:775px;top:530px;width:37px;height:27px;padding-right:2px;box-sizing:border-box;background:#ffffff;color:#ff0000;line-height:31px">勝</div>
<div style="left:813px;top:530px;width:37px;height:27px;padding-right:2px;box-sizing:border-box;background:#ffffff;color:#ff0000;line-height:31px">贏</div>
<div style="left:851px;top:530px;width:55px;height:27px;padding-right:2px;box-sizing:border-box;background:#ffffff;color:#008000;line-height:31px">小</div>
<div style="left:0px;top:558px;width:68px;height:27px;padding-right:2px;box-sizing:border-box;background:#990099;color:#fff;line-height:31px">德甲</div>
<div style="left:69px;top:558px;width:73px;height:27px;background:#efefef;color:#333;line-height:31px"><span class="dg">25-08-30</span></div>
<div style="left:143px;top:558px;width:104px;height:27px;padding-right:2px;box-sizing:border-box;background:#efefef;color:#000;line-height:31px"><span style="color:#008000">RB莱比锡</span></div>
<div style="left:248px;top:558px;width:84px;height:27px;background:#efefef;color:#333;line-height:31px"><span class="dg" style="transform:scaleX(0.98)"><span style="color:#ff0000">2-0</span>(0-0)</span></div>
<div style="left:333px;top:558px;width:38px;height:27px;background:#efefef;color:#333;line-height:31px"><span class="dg">4-3</span></div>
<div style="left:372px;top:558px;width:73px;height:27px;padding-right:2px;box-sizing:border-box;background:#efefef;color:#000;line-height:31px"><span style="color:#000">海登海默</span></div>
<div style="left:446px;top:558px;width:39px;height:27px;background:#fdf8f6;color:#333;line-height:31px"><span class="dg">1.05</span></div>
<div style="left:486px;top:558px;width:64px;height:27px;background:#fdf8f6;color:#000;line-height:31px">一/球半</div>
<div style="left:551px;top:558px;width:40px;height:27px;background:#fdf8f6;color:#333;line-height:31px"><span class="dg">0.84</span></div>
<div style="left:592px;top:558px;width:63px;height:27px;background:#f0f7fc;color:#333;line-height:31px"><span class="dg">1.46</span></div>
<div style="left:656px;top:558px;width:51px;height:27px;background:#f0f7fc;color:#333;line-height:31px"><span class="dg">4.83</span></div>
<div style="left:708px;top:558px;width:66px;height:27px;background:#f0f7fc;color:#333;line-height:31px"><span class="dg">6.06</span></div>
<div style="left:775px;top:558px;width:37px;height:27px;padding-right:2px;box-sizing:border-box;background:#efefef;color:#ff0000;line-height:31px">勝</div>
<div style="left:813px;top:558px;width:37px;height:27px;padding-right:2px;box-sizing:border-box;background:#efefef;color:#ff0000;line-height:31px">贏</div>
<div style="left:851px;top:558px;width:55px;height:27px;padding-right:2px;box-sizing:border-box;background:#efefef;color:#008000;line-height:31px">小</div>
<div style="left:0px;top:586px;width:68px;height:27px;padding-right:2px;box-sizing:border-box;background:#990099;color:#fff;line-height:31px">德甲</div>
<div style="left:69px;top:586px;width:73px;height:27px;background:#ffffff;color:#333;line-height:31px"><span class="dg">25-08-23</span></div>
<div style="left:143px;top:586px;width:104px;height:27px;padding-right:2px;box-sizing:border-box;background:#ffffff;color:#000;line-height:31px"><span style="color:#000">拜仁慕尼黑</span></div>
<div style="left:248px;top:586px;width:84px;height:27px;background:#ffffff;color:#333;line-height:31px"><span class="dg" style="transform:scaleX(0.98)"><span style="color:#ff0000">6-0</span>(3-0)</span></div>
<div style="left:333px;top:586px;width:38px;height:27px;background:#ffffff;color:#333;line-height:31px"><span class="dg">5-5</span></div>
<div style="left:372px;top:586px;width:73px;height:27px;padding-right:2px;box-sizing:border-box;background:#ffffff;color:#000;line-height:31px"><span style="color:#008000">RB莱比锡</span></div>
<div style="left:446px;top:586px;width:39px;height:27px;background:#fdf8f6;color:#333;line-height:31px"><span class="dg">0.99</span></div>
<div style="left:486px;top:586px;width:64px;height:27px;background:#fdf8f6;color:#000;line-height:31px">两球</div>
<div style="left:551px;top:586px;width:40px;height:27px;background:#fdf8f6;color:#333;line-height:31px"><span class="dg">0.90</span></div>
<div style="left:592px;top:586px;width:63px;height:27px;background:#f0f7fc;color:#333;line-height:31px"><span class="dg">1.23</span></div>
<div style="left:656px;top:586px;width:51px;height:27px;background:#f0f7fc;color:#333;line-height:31px"><span class="dg">7.07</span></div>
<div style="left:708px;top:586px;width:66px;height:27px;background:#f0f7fc;color:#333;line-height:31px"><span class="dg">10.07</span></div>
<div style="left:775px;top:586px;width:37px;height:27px;padding-right:2px;box-sizing:border-box;background:#ffffff;color:#008000;line-height:31px">負</div>
<div style="left:813px;top:586px;width:37px;height:27px;padding-right:2px;box-sizing:border-box;background:#ffffff;color:#008000;line-height:31px">輸</div>
<div style="left:851px;top:586px;width:55px;height:27px;padding-right:2px;box-sizing:border-box;background:#ffffff;color:#ff0000;line-height:31px">大</div>
<div style="left:0px;top:614px;width:68px;height:27px;padding-right:2px;box-sizing:border-box;background:#a00000;color:#fff;line-height:31px">德国杯</div>
<div style="left:69px;top:614px;width:73px;height:27px;background:#efefef;color:#333;line-height:31px"><span class="dg">25-08-16</span></div>
<div style="left:143px;top:614px;width:104px;height:27px;padding-right:2px;box-sizing:border-box;background:#efefef;color:#000;line-height:31px"><span style="color:#000">桑德豪森</span></div>
<div style="left:248px;top:614px;width:84px;height:27px;background:#efefef;color:#333;line-height:31px"><span class="dg" style="transform:scaleX(0.98)"><span style="color:#ff0000">2-4</span>(2-2)</span></div>
<div style="left:333px;top:614px;width:38px;height:27px;background:#efefef;color:#333;line-height:31px"><span class="dg">2-10</span></div>
<div style="left:372px;top:614px;width:73px;height:27px;padding-right:2px;box-sizing:border-box;background:#efefef;color:#000;line-height:31px"><span style="color:#008000">RB莱比锡</span></div>
<div style="left:446px;top:614px;width:39px;height:27px;background:#fdf8f6;color:#333;line-height:31px"><span class="dg">0.90</span></div>
<div style="left:486px;top:614px;width:64px;height:27px;background:#fdf8f6;color:#000;line-height:31px"><span style="color:#ff0000">*</span>两球半</div>
<div style="left:551px;top:614px;width:40px;height:27px;background:#fdf8f6;color:#333;line-height:31px"><span class="dg">0.80</span></div>
<div style="left:592px;top:614px;width:63px;height:27px;background:#f0f7fc;color:#333;line-height:31px"><span class="dg">16.67</span></div>
<div style="left:656px;top:614px;width:51px;height:27px;background:#f0f7fc;color:#333;line-height:31px"><span class="dg">9.34</span></div>
<div style="left:708px;top:614px;width:66px;height:27px;background:#f0f7fc;color:#333;line-height:31px"><span class="dg">1.10</span></div>
<div style="left:775px;top:614px;width:37px;height:27px;padding-right:2px;box-sizing:border-box;background:#efefef;color:#ff0000;line-height:31px">勝</div>
<div style="left:813px;top:614px;width:37px;height:27px;padding-right:2px;box-sizing:border-box;background:#efefef;color:#008000;line-height:31px">輸</div>
<div style="left:851px;top:614px;width:55px;height:27px;padding-right:2px;box-sizing:border-box;background:#efefef;color:#ff0000;line-height:31px">大</div>
<div style="left:0px;top:642px;width:68px;height:27px;padding-right:2px;box-sizing:border-box;background:#00a8a8;color:#fff;line-height:31px">球会友谊</div>
<div style="left:69px;top:642px;width:73px;height:27px;background:#ffffff;color:#333;line-height:31px"><span class="dg">25-08-10</span></div>
<div style="left:143px;top:642px;width:104px;height:27px;padding-right:2px;box-sizing:border-box;background:#ffffff;color:#000;line-height:31px"><span style="color:#000">朗斯</span></div>
<div style="left:248px;top:642px;width:84px;height:27px;background:#ffffff;color:#333;line-height:31px"><span class="dg" style="transform:scaleX(0.98)"><span style="color:#ff0000">2-1</span>(0-0)</span></div>
<div style="left:333px;top:642px;width:38px;height:27px;background:#ffffff;color:#333;line-height:31px"><span class="dg">4-1</span></div>
<div style="left:372px;top:642px;width:73px;height:27px;padding-right:2px;box-sizing:border-box;background:#ffffff;color:#000;line-height:31px"><span style="color:#008000">RB莱比锡</span></div>
<div style="left:446px;top:642px;width:39px;height:27px;background:#fdf8f6;color:#333;line-height:31px"></div>
<div style="left:486px;top:642px;width:64px;height:27px;background:#fdf8f6;color:#000;line-height:31px"></div>
<div style="left:551px;top:642px;width:40px;height:27px;background:#fdf8f6;color:#333;line-height:31px"></div>
<div style="left:592px;top:642px;width:63px;height:27px;background:#f0f7fc;color:#333;line-height:31px"><span class="dg">3.11</span></div>
<div style="left:656px;top:642px;width:51px;height:27px;background:#f0f7fc;color:#333;line-height:31px"><span class="dg">3.56</span></div>
<div style="left:708px;top:642px;width:66px;height:27px;background:#f0f7fc;color:#333;line-height:31px"><span class="dg">2.08</span></div>
<div style="left:775px;top:642px;width:37px;height:27px;padding-right:2px;box-sizing:border-box;background:#ffffff;color:#008000;line-height:31px">負</div>
<div style="left:813px;top:642px;width:37px;height:27px;padding-right:2px;box-sizing:border-box;background:#ffffff;color:#333;line-height:31px"></div>
<div style="left:851px;top:642px;width:55px;height:27px;padding-right:2px;box-sizing:border-box;background:#ffffff;color:#333;line-height:31px"></div>
<div style="left:0px;top:670px;width:68px;height:27px;padding-right:2px;box-sizing:border-box;background:#00a8a8;color:#fff;line-height:31px">球会友谊</div>
<div style="left:69px;top:670px;width:73px;height:27px;background:#efefef;color:#333;line-height:31px"><span class="dg">25-08-02</span></div>
<div style="left:143px;top:670px;width:104px;height:27px;padding-right:2px;box-sizing:border-box;background:#efefef;color:#000;line-height:31px"><span style="color:#008000">RB莱比锡</span></div>
<div style="left:248px;top:670px;width:84px;height:27px;background:#efefef;color:#333;line-height:31px"><span class="dg" style="transform:scaleX(0.98)"><span style="color:#ff0000">1-2</span>(1-0)</span></div>
<div style="left:333px;top:670px;width:38px;height:27px;background:#efefef;color:#333;line-height:31px"><span class="dg">4-10</span></div>
<div style="left:372px;top:670px;width:73px;height:27px;padding-right:2px;box-sizing:border-box;background:#efefef;color:#000;line-height:31px"><span style="color:#000">亚特兰大</span></div>
<div style="left:446px;top:670px;width:39px;height:27px;background:#fdf8f6;color:#333;line-height:31px"><span class="dg">0.90</span></div>
<div style="left:486px;top:670px;width:64px;height:27px;background:#fdf8f6;color:#000;line-height:31px">半球</div>
<div style="left:551px;top:670px;width:40px;height:27px;background:#fdf8f6;color:#333;line-height:31px"><span class="dg">0.92</span></div>
<div style="left:592px;top:670px;width:63px;height:27px;background:#f0f7fc;color:#333;line-height:31px"><span class="dg">2.03</span></div>
<div style="left:656px;top:670px;width:51px;height:27px;background:#f0f7fc;color:#333;line-height:31px"><span class="dg">3.75</span></div>
<div style="left:708px;top:670px;width:66px;height:27px;background:#f0f7fc;color:#333;line-height:31px"><span class="dg">3.10</span></div>
<div style="left:775px;top:670px;width:37px;height:27px;padding-right:2px;box-sizing:border-box;background:#efefef;color:#008000;line-height:31px">負</div>
<div style="left:813px;top:670px;width:37px;height:27px;padding-right:2px;box-sizing:border-box;background:#efefef;color:#008000;line-height:31px">輸</div>
<div style="left:851px;top:670px;width:55px;height:27px;padding-right:2px;box-sizing:border-box;background:#efefef;color:#008000;line-height:31px">小</div>
<div style="left:0px;top:698px;width:68px;height:27px;padding-right:2px;box-sizing:border-box;background:#00a8a8;color:#fff;line-height:31px">球会友谊</div>
<div style="left:69px;top:698px;width:73px;height:27px;background:#ffffff;color:#333;line-height:31px"><span class="dg">25-07-26</span></div>
<div style="left:143px;top:698px;width:104px;height:27px;padding-right:2px;box-sizing:border-box;background:#ffffff;color:#000;line-height:31px"><span style="color:#008000">RB莱比锡(中)</span></div>
<div style="left:248px;top:698px;width:84px;height:27px;background:#ffffff;color:#333;line-height:31px"><span class="dg" style="transform:scaleX(0.98)"><span style="color:#ff0000">7-0</span>(5-0)</span></div>
<div style="left:333px;top:698px;width:38px;height:27px;background:#ffffff;color:#333;line-height:31px"><span class="dg">7-3</span></div>
<div style="left:372px;top:698px;width:73px;height:27px;padding-right:2px;box-sizing:border-box;background:#ffffff;color:#000;line-height:31px"><span style="color:#000">图鲁兹</span></div>
<div style="left:446px;top:698px;width:39px;height:27px;background:#fdf8f6;color:#333;line-height:31px"></div>
<div style="left:486px;top:698px;width:64px;height:27px;background:#fdf8f6;color:#000;line-height:31px"></div>
<div style="left:551px;top:698px;width:40px;height:27px;background:#fdf8f6;color:#333;line-height:31px"></div>
<div style="left:592px;top:698px;width:63px;height:27px;background:#f0f7fc;color:#333;line-height:31px"><span class="dg">1.65</span></div>
<div style="left:656px;top:698px;width:51px;height:27px;background:#f0f7fc;color:#333;line-height:31px"><span class="dg">3.97</span></div>
<div style="left:708px;top:698px;width:66px;height:27px;background:#f0f7fc;color:#333;line-height:31px"><span class="dg">4.27</span></div>
<div style="left:775px;top:698px;width:37px;height:27px;padding-right:2px;box-sizing:border-box;background:#ffffff;color:#ff0000;line-height:31px">勝</div>
<div style="left:813px;top:698px;width:37px;height:27px;padding-right:2px;box-sizing:border-box;background:#ffffff;color:#333;line-height:31px"></div>
<div style="left:851px;top:698px;width:55px;height:27px;padding-right:2px;box-sizing:border-box;background:#ffffff;color:#333;line-height:31px"></div>
<div style="left:0px;top:726px;width:68px;height:27px;padding-right:2px;box-sizing:border-box;background:#00a8a8;color:#fff;line-height:31px">球会友谊</div>
<div style="left:69px;top:726px;width:73px;height:27px;background:#efefef;color:#333;line-height:31px"><span class="dg">25-07-19</span></div>
<div style="left:143px;top:726px;width:104px;height:27px;padding-right:2px;box-sizing:border-box;background:#efefef;color:#000;line-height:31px"><span style="color:#000">马瑟维兹英</span></div>
<div style="left:248px;top:726px;width:84px;height:27px;background:#efefef;color:#333;line-height:31px"><span class="dg" style="transform:scaleX(0.98)"><span style="color:#ff0000">0-3</span>(0-2)</span></div>
<div style="left:333px;top:726px;width:38px;height:27px;background:#efefef;color:#333;line-height:31px"></div>
<div style="left:372px;top:726px;width:73px;height:27px;padding-right:2px;box-sizing:border-box;background:#efefef;color:#000;line-height:31px"><span style="color:#008000">RB莱比锡</span></div>
<div style="left:446px;top:726px;width:39px;height:27px;background:#fdf8f6;color:#333;line-height:31px"></div>
<div style="left:486px;top:726px;width:64px;height:27px;background:#fdf8f6;color:#000;line-height:31px"></div>
<div style="left:551px;top:726px;width:40px;height:27px;background:#fdf8f6;color:#333;line-height:31px"></div>
<div style="left:592px;top:726px;width:63px;height:27px;background:#f0f7fc;color:#333;line-height:31px"></div>
<div style="left:656px;top:726px;width:51px;height:27px;background:#f0f7fc;color:#333;line-height:31px"></div>
<div style="left:708px;top:726px;width:66px;height:27px;background:#f0f7fc;color:#333;line-height:31px"></div>
<div style="left:775px;top:726px;width:37px;height:27px;padding-right:2px;box-sizing:border-box;background:#efefef;color:#ff0000;line-height:31px">勝</div>
<div style="left:813px;top:726px;width:37px;height:27px;padding-right:2px;box-sizing:border-box;background:#efefef;color:#333;line-height:31px"></div>
<div style="left:851px;top:726px;width:55px;height:27px;padding-right:2px;box-sizing:border-box;background:#efefef;color:#333;line-height:31px"></div>
</body></html>
